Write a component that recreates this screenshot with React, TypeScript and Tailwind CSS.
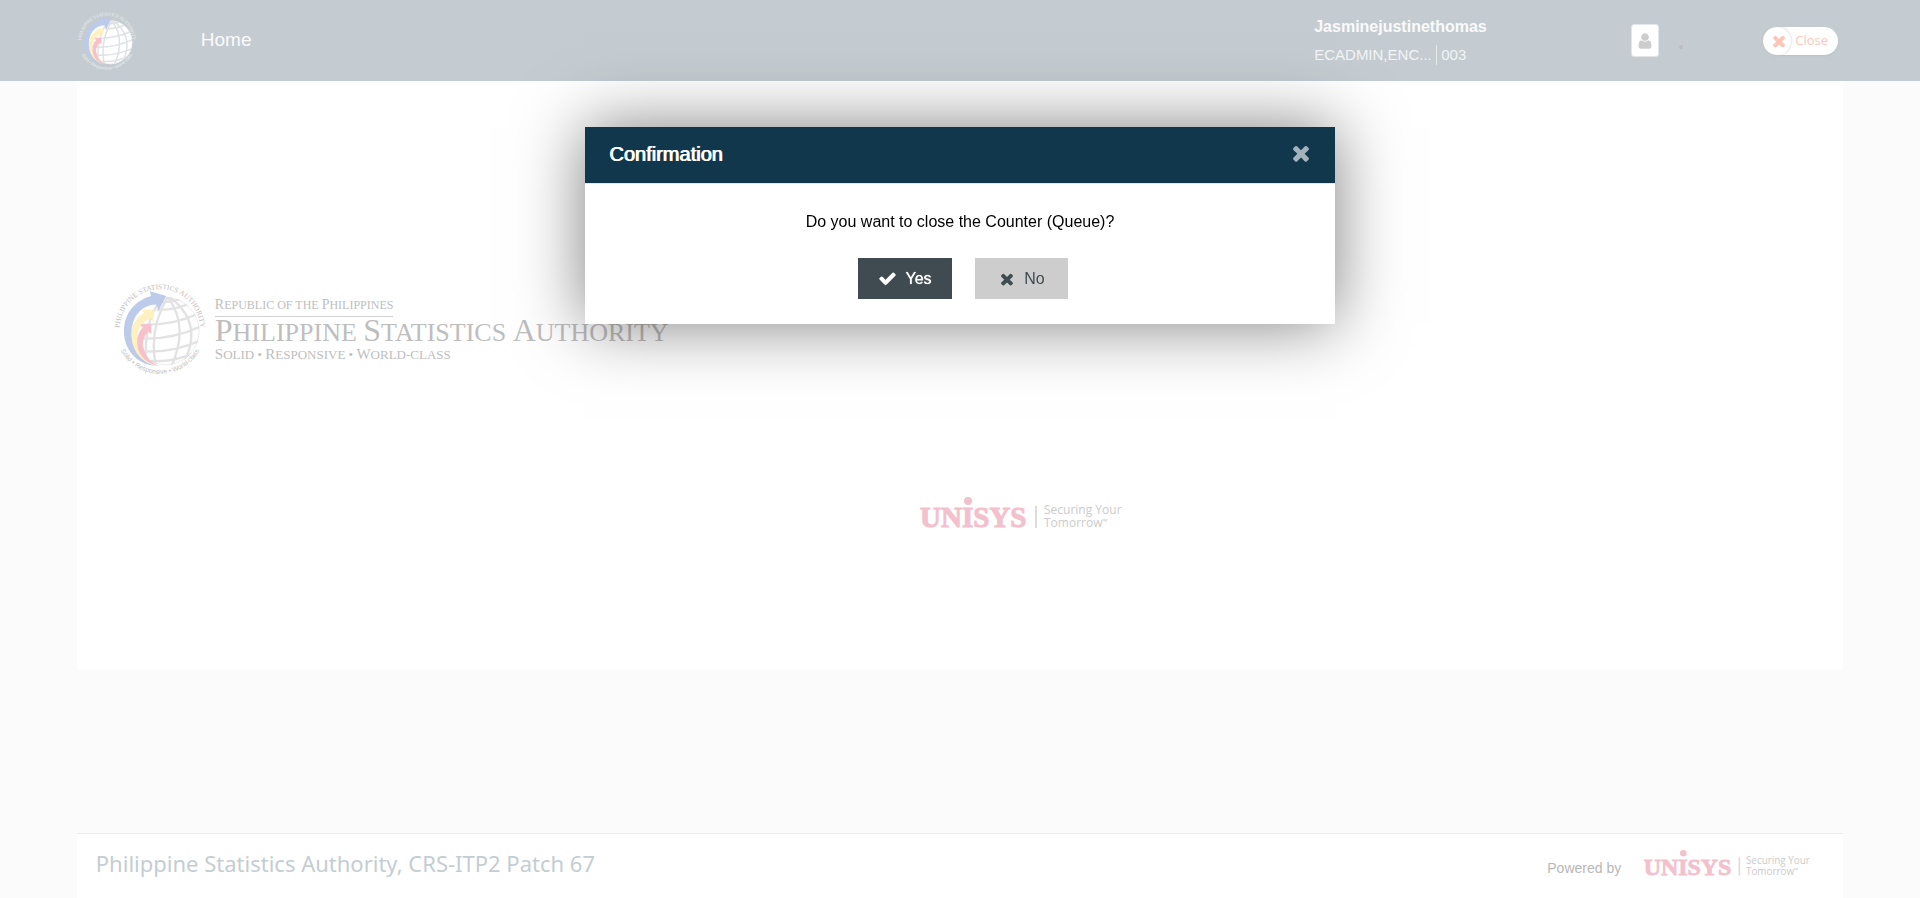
import React from "react";

const ARIAL = "font-['Liberation_Sans',Arial,sans-serif]";

type IconProps = { className?: string };

function TimesIcon({ className }: IconProps) {
  return (
    <svg viewBox="0 0 1792 1792" fill="currentColor" className={className} aria-hidden="true">
      <path d="M1490 1322q0 40-28 68l-136 136q-28 28-68 28t-68-28l-294-294-294 294q-28 28-68 28t-68-28l-136-136q-28-28-28-68t28-68l294-294-294-294q-28-28-28-68t28-68l136-136q28-28 68-28t68 28l294 294 294-294q28-28 68-28t68 28l136 136q28 28 28 68t-28 68l-294 294 294 294q28 28 28 68z" />
    </svg>
  );
}

function CheckIcon({ className }: IconProps) {
  return (
    <svg viewBox="0 0 1792 1792" fill="currentColor" className={className} aria-hidden="true">
      <path d="M1671 566q0 40-28 68l-724 724-136 136q-28 28-68 28t-68-28l-136-136-362-362q-28-28-28-68t28-68l136-136q28-28 68-28t68 28l294 295 656-657q28-28 68-28t68 28l136 136q28 28 28 68z" />
    </svg>
  );
}

function UserIcon({ className }: IconProps) {
  return (
    <svg viewBox="0 0 1792 1792" fill="currentColor" className={className} aria-hidden="true">
      <path d="M1536 1399q0 109-62.5 187t-150.5 78h-854q-88 0-150.5-78t-62.5-187q0-85 8.5-160.5t31.5-152 58.5-131 94-89 134.5-34.5q131 128 313 128t313-128q76 0 134.5 34.5t94 89 58.5 131 31.5 152 8.5 160.5zm-256-887q0 159-112.5 271.5t-271.5 112.5-271.5-112.5-112.5-271.5 112.5-271.5 271.5-112.5 271.5 112.5 112.5 271.5z" />
    </svg>
  );
}

function Seal({ id, className, ink, grid }: { id: string; className: string; ink: string; grid: string }) {
  return (
    <svg viewBox="40 38 280 284" className={className} role="img" aria-label="Philippine Statistics Authority seal">
      <defs>
        <path id={`${id}-top`} d="M60 204 A122 122 0 1 1 300 204" />
        <path id={`${id}-bottom`} d="M49 216 A136 136 0 0 0 311 216" />
        <clipPath id={`${id}-globe`}>
          <circle cx="196" cy="186" r="104" />
        </clipPath>
      </defs>
      <circle cx="196" cy="186" r="104" fill="#fff" />
      <g clipPath={`url(#${id}-globe)`} fill="none" stroke={grid} strokeWidth="7">
        <path d="M170 122 Q230 124 282 96" />
        <path d="M120 166 Q210 172 296 134" />
        <path d="M110 208 Q210 216 304 172" />
        <path d="M116 246 Q210 256 304 214" />
        <path d="M140 276 Q215 284 290 250" />
        <path d="M178 100 Q130 160 138 292" />
        <path d="M204 82 Q144 180 168 294" />
        <path d="M202 82 Q270 170 214 294" />
        <path d="M206 82 Q316 160 250 286" />
        <path d="M170 98 Q196 104 240 90" />
      </g>
      <circle cx="196" cy="186" r="102" fill="none" stroke={grid} strokeWidth="2" />
      <path d="M172 292 C110 290 70 240 71 186 C72 132 104 94 153 80 L149 66 L199 80 L176 124 L168 106 C122 108 92 146 94 196 C96 246 126 284 172 292Z" fill="#bccbea" />
      <path d="M172 292 C124 282 94 244 94 198 C95 168 108 144 132 132 L124 122 L162 121 L160 158 L151 148 C122 160 108 184 111 218 C114 254 136 282 172 292Z" fill="#fff0bf" />
      <path d="M180 293 C132 284 110 252 111 218 C112 200 118 184 128 176 L120 166 L154 166 L154 196 L145 188 C130 202 126 218 130 236 C136 262 152 284 180 293Z" fill="#f6c1ca" />
      <text fill={ink} fontFamily="'Liberation Serif', serif" fontSize="22" textAnchor="middle">
        <textPath href={`#${id}-top`} startOffset="50%">
          PHILIPPINE STATISTICS AUTHORITY
        </textPath>
      </text>
      <text fill={ink} fontFamily="'Liberation Sans', sans-serif" fontSize="20" textAnchor="middle">
        <textPath href={`#${id}-bottom`} startOffset="50%">
          Solid • Responsive • World-class
        </textPath>
      </text>
    </svg>
  );
}

function Unisys({ className }: IconProps) {
  return (
    <svg viewBox="0 0 204 36" className={className} role="img" aria-label="Unisys, Securing Your Tomorrow">
      <g fill="#f3c0cd">
        <text x="1" y="31" fontFamily="'Liberation Serif', serif" fontWeight="700" fontSize="29" stroke="#f3c0cd" strokeWidth="1">
          UNISYS
        </text>
        <circle cx="49" cy="5" r="4" />
      </g>
      <path d="M117 10V32" stroke="#dcdcdc" strokeWidth="2" />
      <g fill="#cbcbcb" fontFamily="'Open Sans', 'Noto Sans', sans-serif">
        <text x="125" y="18" fontSize="12">Securing Your</text>
        <text x="125" y="31" fontSize="12">Tomorrow</text>
        <text x="183" y="28" fontSize="7">™</text>
      </g>
    </svg>
  );
}

function CapsLine({ words, className, initial }: { words: string[]; className: string; initial: string }) {
  return (
    <p className={`whitespace-pre ${className}`}>
      {words.map((word, i) => (
        <React.Fragment key={i}>
          {i > 0 && " "}
          {/^[A-Z]/.test(word) ? (
            <>
              <span className={initial}>{word[0]}</span>
              {word.slice(1).toUpperCase()}
            </>
          ) : (
            word.toUpperCase()
          )}
        </React.Fragment>
      ))}
    </p>
  );
}

function Header() {
  return (
    <header className="flex h-[81px] items-center bg-[#c4ccd1] px-[4%] text-[#fafafa]">
      <Seal id="nav" className="h-[60px] w-[60px]" ink="#eceff0" grid="#dfe2e4" />
      <nav className="ml-16 flex-1">
        <a href="#home" className="text-[19px]">Home</a>
      </nav>
      <div className="flex w-[317px] flex-col">
        <span className="text-base leading-7 font-bold">Jasminejustinethomas</span>
        <span className="flex items-center text-[15px] leading-7 text-[#f2f4f5]">
          <span className="w-[122px] truncate">ECADMIN,ENC...</span>
          <span className="border-l border-[#e8ebed] pl-1 leading-5">003</span>
        </span>
      </div>
      <button type="button" aria-label="Profile" className="flex h-[33px] w-7 items-center justify-center rounded-[3px] border border-[#e3e6e8] bg-white text-[#cdcdcd]">
        <UserIcon className="size-[18px]" />
      </button>
      <span className="mt-3 ml-5 size-1 rounded-full bg-[#bcbcbc]" />
      <button type="button" className="mr-[5px] ml-20 flex h-7 w-[75px] items-center rounded-full bg-white font-['Open_Sans','Noto_Sans',sans-serif] text-[13px] text-[#ffc6b8] shadow-[0_1px_2px_#b9c0c5]">
        <span className="mr-1 flex size-7 items-center justify-center rounded-full pl-1 shadow-[0_0_3px_#c8c8c8]">
          <TimesIcon className="size-[18px]" />
        </span>
        Close
      </button>
    </header>
  );
}

function Dialog() {
  return (
    <div className="fixed inset-0 flex items-start justify-center pt-[127px]">
      <section
        role="dialog"
        aria-modal="true"
        aria-labelledby="dialog-title"
        className="w-full max-w-[750px] bg-white shadow-[0_0_64px_rgba(0,0,0,0.5)]"
      >
        <div className="flex h-14 items-center justify-between bg-[#11374d] pr-[22px] pl-6">
          <h2 id="dialog-title" className="pb-0.5 text-xl text-white [text-shadow:1px_0_0_#fff]">Confirmation</h2>
          <button type="button" aria-label="Dismiss" className="pb-1 text-[#a3b2bb]">
            <TimesIcon className="size-6" />
          </button>
        </div>
        <div className="flex flex-col items-center border-t border-[#e5e5e5] pt-[26px] pb-[25px]">
          <p className="text-base text-black">Do you want to close the Counter (Queue)?</p>
          <div className="mt-6 ml-1.5 flex gap-[23px] text-base">
            <button type="button" className="flex h-[41px] w-[94px] items-center justify-center gap-2 bg-[#3f4b51] text-white [text-shadow:0_0_1px_#fff]">
              <CheckIcon className="size-[19px]" />
              Yes
            </button>
            <button type="button" className="flex h-[41px] w-[93px] items-center justify-center gap-2 bg-[#cdcdcd] text-[#3f4b51]">
              <TimesIcon className="size-[18px]" />
              No
            </button>
          </div>
        </div>
      </section>
    </div>
  );
}

export default function App() {
  return (
    <div className={`flex min-h-screen flex-col bg-[#fbfbfb] ${ARIAL}`}>
      <Header />
      <main className="mx-[4%] rounded-b bg-white pt-[201px] pb-[138px]">
        <div className="flex items-center gap-2 pl-9 font-['Liberation_Serif',serif] text-[#bebebe]">
          <Seal id="main" className="h-[94px] w-[94px]" ink="#bebebe" grid="#e2e2e2" />
          <div>
            <CapsLine words={["Republic", "of", "the", "Philippines"]} className="w-fit border-b border-[#d2d2d2] pb-px text-xs leading-4" initial="text-sm" />
            <CapsLine words={["Philippine", "Statistics", "Authority"]} className="text-[26px] leading-[26px]" initial="text-[32px]" />
            <CapsLine words={["Solid", "•", "Responsive", "•", "World-class"]} className="text-[13px] leading-4" initial="text-[15px]" />
          </div>
        </div>
        <Unisys className="mt-[120px] ml-[47.7%] h-9 w-[204px]" />
      </main>
      <footer className="mx-[4%] mt-auto flex h-[65px] items-center justify-between border-t border-[#ececec] bg-white pr-8 pl-[19px]">
        <p className="pb-1.5 font-['Noto_Sans','Open_Sans',sans-serif] text-[22px] leading-8 text-[#c4cdd2]">
          Philippine Statistics Authority, CRS-ITP2 Patch 67
        </p>
        <div className="flex items-center gap-[22px]">
          <span className="pt-1 text-sm text-[#b8b8b8]">Powered by</span>
          <Unisys className="mb-1 h-[30px] w-[168px]" />
        </div>
      </footer>
      <Dialog />
    </div>
  );
}
